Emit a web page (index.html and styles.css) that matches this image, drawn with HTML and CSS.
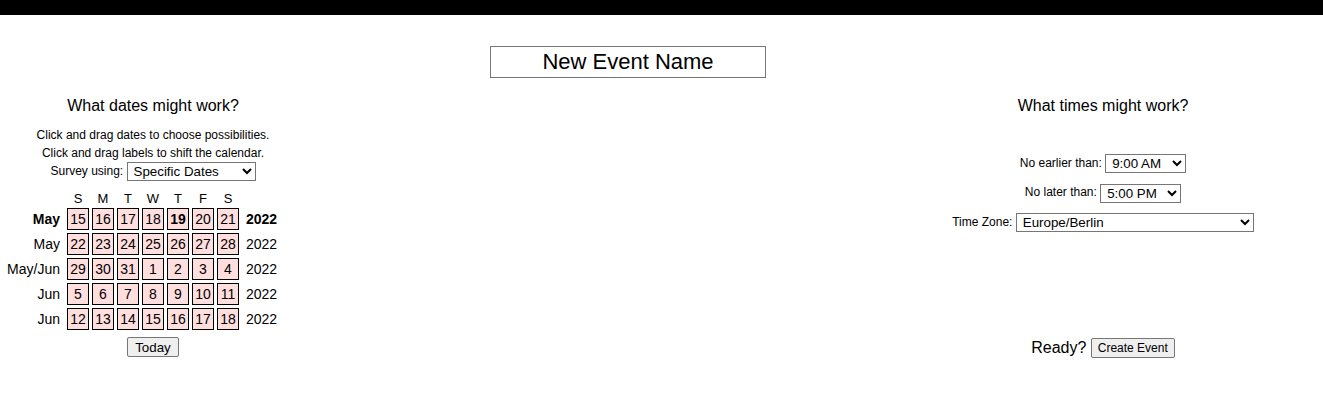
FILE: index.html
```html
<!DOCTYPE html>
<html>
<head>
	<title>when2meet - New Event</title>
	<link rel="stylesheet" href="styles.css">
</head>
<body>
	<div class="topbar"></div>

	<div class="name-row">
		<input type="text" class="event-name" id="eventName" value="New Event Name">
	</div>

	<div class="columns">
		<!-- dates side -->
		<div class="dates">
			<div class="col-title">What dates might work?</div>
			<div class="hint">Click and drag dates to choose possibilities.<br>Click and drag labels to shift the calendar.</div>
			<div class="hint">
				<label for="survey">Survey using:</label>
				<select id="survey" class="survey-select">
					<option>Specific Dates</option>
					<option>Days of the Week</option>
				</select>
			</div>

			<div class="calendar" id="calendar">
				<div></div>
				<div class="dow">S</div>
				<div class="dow">M</div>
				<div class="dow">T</div>
				<div class="dow">W</div>
				<div class="dow">T</div>
				<div class="dow">F</div>
				<div class="dow">S</div>
				<div></div>
			</div>

			<button type="button" class="btn today-btn">Today</button>
		</div>

		<!-- times side -->
		<div class="times">
			<div class="col-title">What times might work?</div>
			<div class="time-rows">
				<div class="hint">
					<label for="earliest">No earlier than:</label>
					<select id="earliest" class="time-select">
						<option>8:00 AM</option>
						<option selected>9:00 AM</option>
						<option>10:00 AM</option>
					</select>
				</div>
				<div class="hint">
					<label for="latest">No later than:</label>
					<select id="latest" class="time-select">
						<option>4:00 PM</option>
						<option selected>5:00 PM</option>
						<option>6:00 PM</option>
					</select>
				</div>
				<div class="hint">
					<label for="tz">Time Zone:</label>
					<select id="tz" class="tz-select">
						<option>Europe/London</option>
						<option selected>Europe/Berlin</option>
						<option>Europe/Paris</option>
					</select>
				</div>
			</div>
			<div class="ready">
				Ready? <button type="button" class="btn create-btn">Create Event</button>
			</div>
		</div>
	</div>

	<script>
		// build the five calendar weeks, starting Sunday 15 May 2022
		const calendar = document.getElementById("calendar");
		const months = ["Jan","Feb","Mar","Apr","May","Jun","Jul","Aug","Sep","Oct","Nov","Dec"];
		const start = new Date(2022, 4, 15);

		for (let w = 0; w < 5; w++) {
			const first = new Date(start.getFullYear(), start.getMonth(), start.getDate() + w * 7);
			const last = new Date(first.getFullYear(), first.getMonth(), first.getDate() + 6);

			let label = months[first.getMonth()];
			if (last.getMonth() != first.getMonth()) label += "/" + months[last.getMonth()];

			const monthCell = document.createElement("div");
			monthCell.className = "month" + (w == 0 ? " current" : "");
			monthCell.textContent = label;
			calendar.appendChild(monthCell);

			for (let d = 0; d < 7; d++) {
				const day = new Date(first.getFullYear(), first.getMonth(), first.getDate() + d);
				const cell = document.createElement("div");
				cell.className = "day";
				if (w == 0 && d == 4) cell.className += " today";
				cell.textContent = day.getDate();
				calendar.appendChild(cell);
			}

			const yearCell = document.createElement("div");
			yearCell.className = "year" + (w == 0 ? " current" : "");
			yearCell.textContent = first.getFullYear();
			calendar.appendChild(yearCell);
		}
	</script>
</body>
</html>
```

FILE: styles.css
```css
body {
	margin: 0;
	padding: 0;
	color: #000;
	background-color: #fff;
	font-family: "Liberation Sans", Arial, sans-serif;
}

.topbar {
	height: 15px;
	background-color: #000;
}

.name-row {
	text-align: center;
	padding-right: 67px;
	margin-top: 31px;
	line-height: 0;
}

.event-name {
	box-sizing: border-box;
	width: 276px;
	height: 32px;
	padding: 1px 2px;
	border: 1px solid #767676;
	font-family: "Liberation Sans", Arial, sans-serif;
	font-size: 22px;
	text-align: center;
	color: #000;
}

.columns {
	display: flex;
	justify-content: space-between;
	margin-top: 19px;
}

.dates {
	width: 306px;
	display: flex;
	flex-direction: column;
	align-items: center;
}

.times {
	width: 440px;
	display: flex;
	flex-direction: column;
	align-items: center;
}

.col-title {
	font-size: 16px;
	line-height: 18px;
	margin-bottom: 11px;
}

.hint {
	font-size: 12px;
	line-height: 18px;
	text-align: center;
}

select, button {
	font-family: "Liberation Sans", Arial, sans-serif;
	font-size: 13.333px;
	color: #000;
}

select {
	box-sizing: border-box;
	height: 19px;
	padding: 0 0 0 2px;
	border: 1px solid #767676;
	border-radius: 0;
	background-color: #fff;
	vertical-align: middle;
}

.survey-select {
	width: 129px;
}

.time-select {
	width: 81px;
}

.tz-select {
	width: 238px;
}

.calendar {
	display: grid;
	grid-template-columns: 60px repeat(7, 22px) 60px;
	grid-auto-rows: 22px;
	grid-template-rows: 15px;
	gap: 3px;
	margin-top: 9px;
	font-size: 14px;
}

.dow {
	font-size: 13px;
	line-height: 15px;
	text-align: center;
	padding-top: 1px;
}

.month {
	text-align: right;
	padding-right: 4px;
	line-height: 22px;
}

.year {
	padding-left: 4px;
	line-height: 22px;
}

.current {
	font-weight: bold;
}

.day {
	box-sizing: border-box;
	border: 1px solid #000;
	background-color: #ffdede;
	text-align: center;
	line-height: 20px;
}

.day.today {
	font-weight: bold;
}

.btn {
	box-sizing: border-box;
	height: 20px;
	padding: 0 6px;
	border: 1px solid #767676;
	border-radius: 2px;
	background-color: #efefef;
	cursor: pointer;
}

.today-btn {
	margin-top: 7px;
	padding: 0 7px;
}

.create-btn {
	font-size: 12px;
}

.time-rows {
	display: flex;
	flex-direction: column;
	align-items: center;
	gap: 10px;
	margin-top: 28px;
}

.ready {
	margin-top: 106px;
	font-size: 16px;
	line-height: 20px;
}

.ready .btn {
	vertical-align: top;
}
```
